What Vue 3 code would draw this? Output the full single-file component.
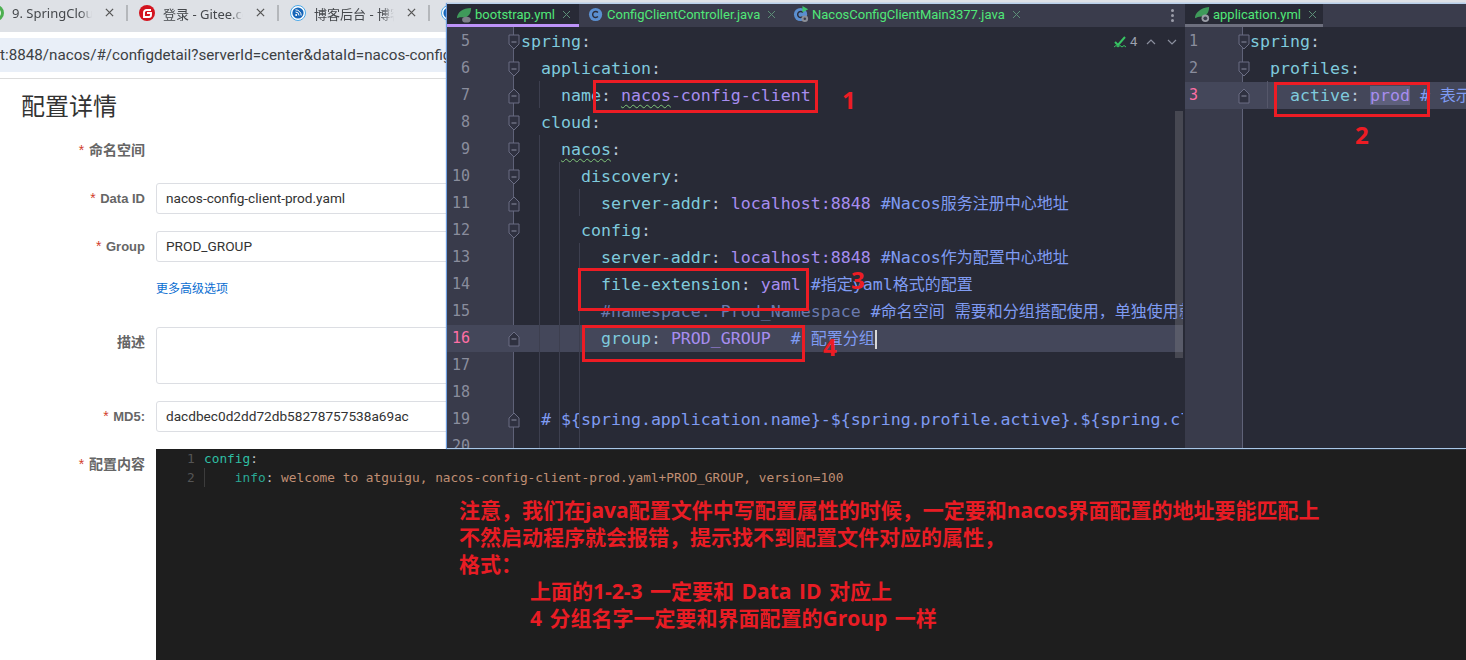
<script setup>
const cjk = /([\u3000-\u9fff\uff00-\uffef]+)/
const segs = (text) => text.split(cjk).filter(Boolean).map((t) => ({ t, zh: cjk.test(t) }))

const K = 'key', C = 'colon', V = 'val', M = 'cm', D = 'dim', W = 'key wavy', VW = 'val wavy'

const leftLines = [
  { n: 5, fold: 'down', indent: 0, toks: [[K, 'spring'], [C, ':']] },
  { n: 6, fold: 'down', indent: 2, toks: [[K, 'application'], [C, ':']] },
  { n: 7, fold: 'up', indent: 4, toks: [[K, 'name'], [C, ': '], [VW, 'nacos'], [V, '-config-client']] },
  { n: 8, fold: 'down', indent: 2, toks: [[K, 'cloud'], [C, ':']] },
  { n: 9, fold: 'down', indent: 4, toks: [[W, 'nacos'], [C, ':']] },
  { n: 10, fold: 'down', indent: 6, toks: [[K, 'discovery'], [C, ':']] },
  { n: 11, fold: 'up', indent: 8, toks: [[K, 'server-addr'], [C, ': '], [V, 'localhost:8848 '], [M, '#Nacos服务注册中心地址']] },
  { n: 12, fold: 'down', indent: 6, toks: [[K, 'config'], [C, ':']] },
  { n: 13, indent: 8, toks: [[K, 'server-addr'], [C, ': '], [V, 'localhost:8848 '], [M, '#Nacos作为配置中心地址']] },
  { n: 14, indent: 8, toks: [[K, 'file-extension'], [C, ': '], [V, 'yaml '], [M, '#指定yaml格式的配置']] },
  { n: 15, indent: 8, toks: [[D, '#namespace: Prod_Namespace '], [M, '#命名空间 需要和分组搭配使用，单独使用就会报错']] },
  { n: 16, fold: 'up', indent: 8, cur: true, toks: [[K, 'group'], [C, ': '], [V, 'PROD_GROUP  '], [M, '# 配置分组']], caret: true },
  { n: 17, indent: 0, toks: [] },
  { n: 18, indent: 0, toks: [] },
  { n: 19, fold: 'up', indent: 2, toks: [[M, '# ${spring.application.name}-${spring.profile.active}.${spring.cloud.nacos.config.file-extension}']] },
  { n: 20, indent: 0, toks: [] },
]

const rightLines = [
  { n: 1, fold: 'down', indent: 0, toks: [[K, 'spring'], [C, ':']] },
  { n: 2, fold: 'down', indent: 2, toks: [[K, 'profiles'], [C, ':']] },
  { n: 3, fold: 'up', indent: 4, cur: true, toks: [[K, 'active'], [C, ': '], ['val sel', 'prod'], [C, ' '], [M, '# 表示开发环境']] },
]

const guides = [
  { x: 18, from: 2, to: 3 },
  { x: 18, from: 4, to: 16 },
  { x: 38, from: 5, to: 16 },
  { x: 58, from: 6, to: 7 },
  { x: 58, from: 8, to: 16 },
]
const guideStyle = (g) => ({ left: g.x + 'px', top: g.from * 27 + 'px', height: (g.to - g.from) * 27 + 'px' })

const ideTabs = [
  { name: 'bootstrap.yml', icon: 'spring', active: true, w: 132 },
  { name: 'ConfigClientController.java', icon: 'class', w: 205 },
  { name: 'NacosConfigClientMain3377.java', icon: 'main', w: 216 },
]

const browserTabs = [
  { title: '9. SpringCloud', icon: 'green' },
  { title: '登录 - Gitee.com', icon: 'gitee' },
  { title: '博客后台 - 博客园', icon: 'blog' },
  { title: '', icon: 'blog', partial: true },
]

const boxes = [
  { l: 593, t: 80, w: 225, h: 33 },
  { l: 1274, t: 82, w: 156, h: 35 },
  { l: 578, t: 268, w: 231, h: 43 },
  { l: 582, t: 325, w: 223, h: 37 },
]
const boxStyle = (b) => ({ left: b.l + 'px', top: b.t + 'px', width: b.w + 'px', height: b.h + 'px' })

const marks = [
  { n: '1', l: 842, t: 85 },
  { n: '2', l: 1355, t: 120 },
  { n: '3', l: 851, t: 265 },
  { n: '4', l: 823, t: 332 },
]
const markStyle = (m) => ({ left: m.l + 'px', top: m.t + 'px' })
</script>

<template>
  <div class="screen">
    <div class="browser">
      <div class="tabstrip">
        <div v-for="(t, i) in browserTabs" :key="i" class="btab" :class="{ partial: t.partial }">
          <svg class="fav" viewBox="0 0 16 16">
            <template v-if="t.icon === 'green'">
              <circle cx="8" cy="8" r="8" fill="#4caf50" />
              <circle cx="8" cy="8" r="5" fill="#e8f5e9" />
            </template>
            <template v-else-if="t.icon === 'gitee'">
              <circle cx="8" cy="8" r="8" fill="#d3141f" />
              <path d="M12 5H7.500A2.500 2.500 0 0 0 5 7.500V12h5a2 2 0 0 0 2-2V8H8" fill="none" stroke="#fff" stroke-width="1.900" />
            </template>
            <template v-else>
              <circle cx="8" cy="8" r="7.500" fill="#fff" stroke="#4aa8e8" stroke-width="1" />
              <circle cx="8" cy="8" r="5.600" fill="#1565b8" />
              <circle cx="6.200" cy="10" r="1" fill="#fff" />
              <path d="M5.500 7a3.500 3.500 0 0 1 3.500 3.500M5.500 4.800a5.700 5.700 0 0 1 5.700 5.700" fill="none" stroke="#fff" stroke-width="1" />
            </template>
          </svg>
          <template v-if="!t.partial">
            <span class="btitle">{{ t.title }}</span>
            <svg class="bclose" viewBox="0 0 10 10"><path d="M1 1l8 8M9 1l-8 8" stroke="#555" stroke-width="1.400" /></svg>
            <i class="bsep"></i>
          </template>
        </div>
      </div>
      <div class="addrbar">
        <div class="addr">t:8848/nacos/#/configdetail?serverId=center&amp;dataId=nacos-config-client-prod.yaml</div>
      </div>

      <div class="page">
        <h1 class="title">配置详情</h1>
        <div class="form">
          <div class="row"><label class="lab zhl"><b>*</b> 命名空间</label></div>
          <div class="row"><label class="lab"><b>*</b> Data ID</label><div class="input">nacos-config-client-prod.yaml</div></div>
          <div class="row"><label class="lab"><b>*</b> Group</label><div class="input">PROD_GROUP</div></div>
          <div class="row"><label class="lab"></label><a class="more">更多高级选项</a></div>
          <div class="row"><label class="lab zhl">描述</label><div class="input area"></div></div>
          <div class="row"><label class="lab"><b>*</b> MD5:</label><div class="input">dacdbec0d2dd72db58278757538a69ac</div></div>
          <div class="row grow">
            <label class="lab zhl"><b>*</b> 配置内容</label>
            <div class="monaco">
              <div class="mline first"><span class="mn">1</span><span class="mk">config</span><span class="mc">:</span></div>
              <div class="mline second"><span class="mn">2</span><span class="mpad">{{ '    ' }}</span><span class="mk2">info</span><span class="mc">: </span><span class="mv">welcome to atguigu, nacos-config-client-prod.yaml+PROD_GROUP, version=100</span></div>
            </div>
          </div>
        </div>
      </div>
    </div>

    <section class="ide">
      <div class="pane left">
        <div class="tabs">
          <div v-for="t in ideTabs" :key="t.name" class="itab" :class="{ active: t.active }" :style="{ width: t.w + 'px' }">
            <svg class="ticon" viewBox="0 0 18 18">
              <template v-if="t.icon === 'spring'">
                <path d="M1 13C1 7 7 2 16 2c0 7-4 10-8 10-3 0-5 0-7 1z" fill="#3f9a5a" />
                <ellipse cx="11" cy="14.500" rx="4.500" ry="3" fill="#7d8088" />
              </template>
              <template v-else>
                <circle cx="8" cy="9" r="7" fill="#5b8fd0" />
                <path d="M10.500 6.800A3.200 3.200 0 1 0 10.500 11.200" fill="none" stroke="#2b2d3a" stroke-width="1.500" />
                <template v-if="t.icon === 'main'">
                  <path d="M10 0l6 3.500L10 7z" fill="#3fc56b" />
                  <circle cx="12.500" cy="13.500" r="3.500" fill="#8a8d96" />
                  <circle cx="12.500" cy="13.500" r="1.300" fill="#3a3c4c" />
                </template>
              </template>
            </svg>
            <span class="tname">{{ t.name }}</span>
            <svg class="tclose" viewBox="0 0 9 9"><path d="M1 1l7 7M8 1L1 8" stroke="#5d8f78" stroke-width="1" /></svg>
          </div>
          <div class="spacer"></div>
          <div class="kebab"><i></i><i></i><i></i></div>
        </div>
        <div class="body">
          <div class="gutter-bg"></div>
          <div class="inspect">
            <svg class="chk" viewBox="0 0 12 12"><path d="M1 6l3 3 7-8" fill="none" stroke="#37c463" stroke-width="2" /><path d="M0 11l2-1.500 2 1.500 2-1.500 2 1.500 2-1.500 2 1.500" fill="none" stroke="#37c463" stroke-width="1" /></svg>
            <span>4</span>
            <svg class="arrow up" viewBox="0 0 10 6"><path d="M1 5l4-4 4 4" fill="none" stroke="#8b8f9e" stroke-width="1.200" /></svg>
            <svg class="arrow down" viewBox="0 0 10 6"><path d="M1 1l4 4 4-4" fill="none" stroke="#8b8f9e" stroke-width="1.200" /></svg>
          </div>
          <div class="guides">
            <i v-for="(g, i) in guides" :key="i" :style="guideStyle(g)"></i>
          </div>
          <div v-for="l in leftLines" :key="l.n" class="line" :class="{ cur: l.cur }">
            <span class="num" :class="{ hot: l.cur }">{{ l.n }}</span>
            <span class="fold">
              <svg v-if="l.fold" viewBox="0 0 12 16">
                <path v-if="l.fold === 'down'" d="M1 1h10v9l-5 5-5-5z" fill="#2f3140" stroke="#6a6d83" />
                <path v-else d="M1 15h10V6L6 1 1 6z" fill="#2f3140" stroke="#6a6d83" />
                <path d="M3.500 8h5" stroke="#8a8da0" />
              </svg>
            </span>
            <span class="code"><span class="pad">{{ ' '.repeat(l.indent) }}</span><template v-for="(tk, i) in l.toks" :key="i"><template v-for="(s, j) in segs(tk[1])" :key="j"><span :class="[tk[0], { zh: s.zh }]">{{ s.t }}</span></template></template><i v-if="l.caret" class="caret"></i></span>
          </div>
          <div class="scrollbar"></div>
        </div>
      </div>
      <div class="pane right">
        <div class="tabs">
          <div class="itab active2">
            <svg class="ticon" viewBox="0 0 18 18">
              <path d="M1 13C1 7 7 2 16 1c0 7-4 10-8 10-3 0-5 1-7 2z" fill="#3f9a5a" />
              <circle cx="12" cy="13" r="4" fill="#9a9da6" />
              <circle cx="12" cy="13" r="2" fill="#3a3c4c" />
            </svg>
            <span class="tname">application.yml</span>
            <svg class="tclose" viewBox="0 0 9 9"><path d="M1 1l7 7M8 1L1 8" stroke="#5d8f78" stroke-width="1" /></svg>
          </div>
        </div>
        <div class="body">
          <div class="gutter-bg"></div>
          <div class="rguide"></div>
          <div v-for="l in rightLines" :key="l.n" class="line" :class="{ cur: l.cur }">
            <span class="num" :class="{ hot: l.cur }">{{ l.n }}</span>
            <span class="fold">
              <svg viewBox="0 0 12 16">
                <path v-if="l.fold === 'down'" d="M1 1h10v9l-5 5-5-5z" fill="#2f3140" stroke="#6a6d83" />
                <path v-else d="M1 15h10V6L6 1 1 6z" fill="#2f3140" stroke="#6a6d83" />
                <path d="M3.500 8h5" stroke="#8a8da0" />
              </svg>
            </span>
            <span class="code"><span class="pad">{{ ' '.repeat(l.indent) }}</span><template v-for="(tk, i) in l.toks" :key="i"><template v-for="(s, j) in segs(tk[1])" :key="j"><span :class="[tk[0], { zh: s.zh }]">{{ s.t }}</span></template></template></span>
          </div>
        </div>
      </div>
    </section>

    <i v-for="(b, i) in boxes" :key="i" class="rbox" :style="boxStyle(b)"></i>
    <span v-for="m in marks" :key="m.n" class="mark" :style="markStyle(m)">{{ m.n }}</span>

    <div class="note">
      <p>注意，我们在java配置文件中写配置属性的时候，一定要和nacos界面配置的地址要能匹配上</p>
      <p>不然启动程序就会报错，提示找不到配置文件对应的属性，</p>
      <p>格式：</p>
      <p class="ind">上面的1-2-3 一定要和 Data ID 对应上</p>
      <p class="ind">4 分组名字一定要和界面配置的Group 一样</p>
    </div>
  </div>
</template>

<style scoped>
.screen { position: relative; width: 1466px; height: 660px; overflow: hidden; background: #fff; font-family: "Noto Sans", "Noto Sans CJK SC", sans-serif; }
.browser { display: flex; flex-direction: column; height: 660px; }
.tabstrip { display: flex; height: 32px; background: #dee1e6; margin-left: -23px; flex: none; }
.btab { position: relative; display: flex; align-items: center; width: 151px; flex: none; height: 26px; padding-left: 11px; box-sizing: border-box; }
.fav { width: 16px; height: 16px; flex: none; }
.btitle { margin-left: 8px; width: 80px; overflow: hidden; white-space: nowrap; font-size: 13px; color: #45484c; -webkit-mask-image: linear-gradient(90deg, #000 85%, transparent); mask-image: linear-gradient(90deg, #000 85%, transparent); }
.bclose { position: absolute; left: 128px; top: 8px; width: 9px; height: 9px; }
.bsep { position: absolute; right: 0; top: 5px; width: 2px; height: 16px; background: #b4b7bb; }
.addrbar { flex: none; padding: 6px 0; box-sizing: border-box; border-bottom: 1px solid #dcdcdc; background: #fff; height: 47px; }
.addr { height: 34px; background: #e9eff8; font: 15.200px/35px Roboto, sans-serif; color: #3c4043; white-space: nowrap; overflow: hidden; }
.page { flex: 1; display: flex; flex-direction: column; min-height: 0; }
.title { margin: 0; padding-left: 21px; height: 56px; font: 400 24px/52px "Noto Sans CJK SC", sans-serif; color: #333; }
.form { flex: 1; display: flex; flex-direction: column; gap: 17px; min-height: 0; }
.row { display: flex; min-height: 31px; }
.row.grow { flex: 1; min-height: 0; }
.lab { width: 145px; flex: none; margin-right: 11px; text-align: right; font: 700 13px/31px "Liberation Sans", "Noto Sans CJK SC", sans-serif; color: #666; }
.lab.zhl { font-size: 14px; }
.lab b { color: #d23c2c; font-weight: 400; font-size: 14px; margin-right: 1px; }
.input { flex: 1; height: 31px; box-sizing: border-box; border: 1px solid #dcdee3; border-radius: 3px; padding-left: 9px; font: 13.650px/29px Roboto, sans-serif; color: #333; }
.input.area { height: 57px; }
.more { font: 12px/17px "Noto Sans CJK SC", sans-serif; color: #0a6ed1; height: 17px; }
.monaco { flex: 1; background: #1e1e1e; font: 12.800px/19px "DejaVu Sans Mono", monospace; white-space: pre; position: relative; }
.mline { height: 19px; padding-left: 48px; position: relative; }
.mn { position: absolute; left: 31px; color: #555; }
.mk { color: #2fbfa3; }
.mk2 { color: #2aa995; }
.mc { color: #c8c8c8; }
.mv { color: #c08f74; }
.second::before { content: ""; position: absolute; left: 48px; top: 0; width: 1px; height: 19px; background: #3c3c3c; }

.ide { position: absolute; left: 447px; top: 3px; width: 1019px; height: 446px; box-sizing: border-box; border-top: 1px solid #b8d0ec; border-bottom: 1px solid #a9c7e8; box-shadow: -1px 0 1px #6f9fe0; display: flex; background: #282a36; overflow: hidden; font-family: Roboto, sans-serif; }
.pane { display: flex; flex-direction: column; min-width: 0; }
.pane.left { width: 738px; flex: none; }
.pane.right { flex: 1; }
.tabs { height: 23px; flex: none; display: flex; background: #3a3c4c; }
.itab { display: flex; align-items: center; box-sizing: border-box; height: 23px; padding: 0 0 3px 9px; flex: none; }
.itab.active { background: #282a36; padding-bottom: 0; border-bottom: 3px solid #bd93f9; }
.itab.active2 { width: 138px; background: #282a36; padding-bottom: 0; border-bottom: 3px solid #6d6f7e; }
.ticon { width: 17px; height: 17px; flex: none; margin-right: 2px; }
.tname { font-size: 13px; color: #50e878; white-space: nowrap; }
.tclose { width: 9px; height: 9px; margin-left: 7px; flex: none; }
.spacer { flex: 1; }
.kebab { width: 26px; display: flex; flex-direction: column; align-items: center; justify-content: center; gap: 2px; }
.kebab i { width: 3px; height: 3px; border-radius: 50%; background: #9a9ca8; }
.body { position: relative; flex: 1; overflow: hidden; padding-top: 1px; background: #282a36; }
.left .body { padding-right: 2px; }
.gutter-bg { position: absolute; left: 0; top: 0; bottom: 0; width: 67px; background: #393b4b; }
.right .gutter-bg { width: 58px; }
.gutter-bg::after { content: ""; position: absolute; right: 0; top: 0; bottom: 0; width: 1px; background: #5f6278; }
.line { position: relative; display: flex; height: 27px; overflow: hidden; white-space: pre; font: 16.600px/27px "DejaVu Sans Mono", monospace; }
.line.cur { background: #44475a; }
.num { width: 23px; flex: none; text-align: right; font: 15px/27px "DejaVu Sans Mono", monospace; color: #8a8d9d; }
.num.hot { color: #ff6fa5; }
.fold { width: 51px; flex: none; display: flex; align-items: center; justify-content: flex-end; box-sizing: border-box; position: relative; }
.fold svg { position: absolute; left: 38px; top: 6px; width: 12px; height: 16px; }
.code { position: relative; }
.key { color: #7fcbdd; }
.colon { color: #b9c4d8; }
.val { color: #a78df0; }
.cm { color: #7f9bf2; }
.dim { color: #6a7aae; }
.zh { font-family: "Noto Sans CJK SC", sans-serif; font-size: 16px; line-height: 0; }
.wavy { text-decoration: underline wavy #7fc77a 1px; text-underline-offset: 3px; }
.sel { background: #5e607c; }
.caret { display: inline-block; width: 2px; height: 19px; background: #d8d8d8; vertical-align: middle; }
.guides i { position: absolute; width: 1px; background: #3d3f4f; margin-left: 74px; z-index: 1; }
.rguide { position: absolute; left: 82px; top: 54px; width: 1px; height: 27px; background: #55576a; z-index: 1; }
.scrollbar { position: absolute; right: 2px; top: 84px; width: 8px; height: 247px; background: rgba(130, 130, 135, .35); z-index: 2; }
.right .num { width: 13px; }
.right .fold { width: 52px; }
.right .fold svg { left: 40px; }
.inspect { position: absolute; left: 667px; top: 0; height: 27px; display: flex; align-items: center; z-index: 2; font: 13px/27px Roboto, sans-serif; color: #9ea2b0; margin-top: 1px; }
.chk { width: 12px; height: 12px; margin-right: 4px; }
.arrow { width: 10px; height: 6px; }
.arrow.up { margin-left: 9px; }
.arrow.down { margin-left: 11px; }

.rbox { position: absolute; box-sizing: border-box; border: 3px solid #ed1c24; z-index: 3; }
.mark { position: absolute; z-index: 3; font: 700 24px/30px "Open Sans", sans-serif; color: #ed1c24; }
.note { position: absolute; left: 459px; top: 497px; z-index: 3; font: 700 21px/27px "Open Sans", "Noto Sans CJK SC", sans-serif; color: #e81c24; white-space: nowrap; }
.note p { margin: 0; }
.note .ind { margin-left: 71px; word-spacing: 2px; }
</style>
